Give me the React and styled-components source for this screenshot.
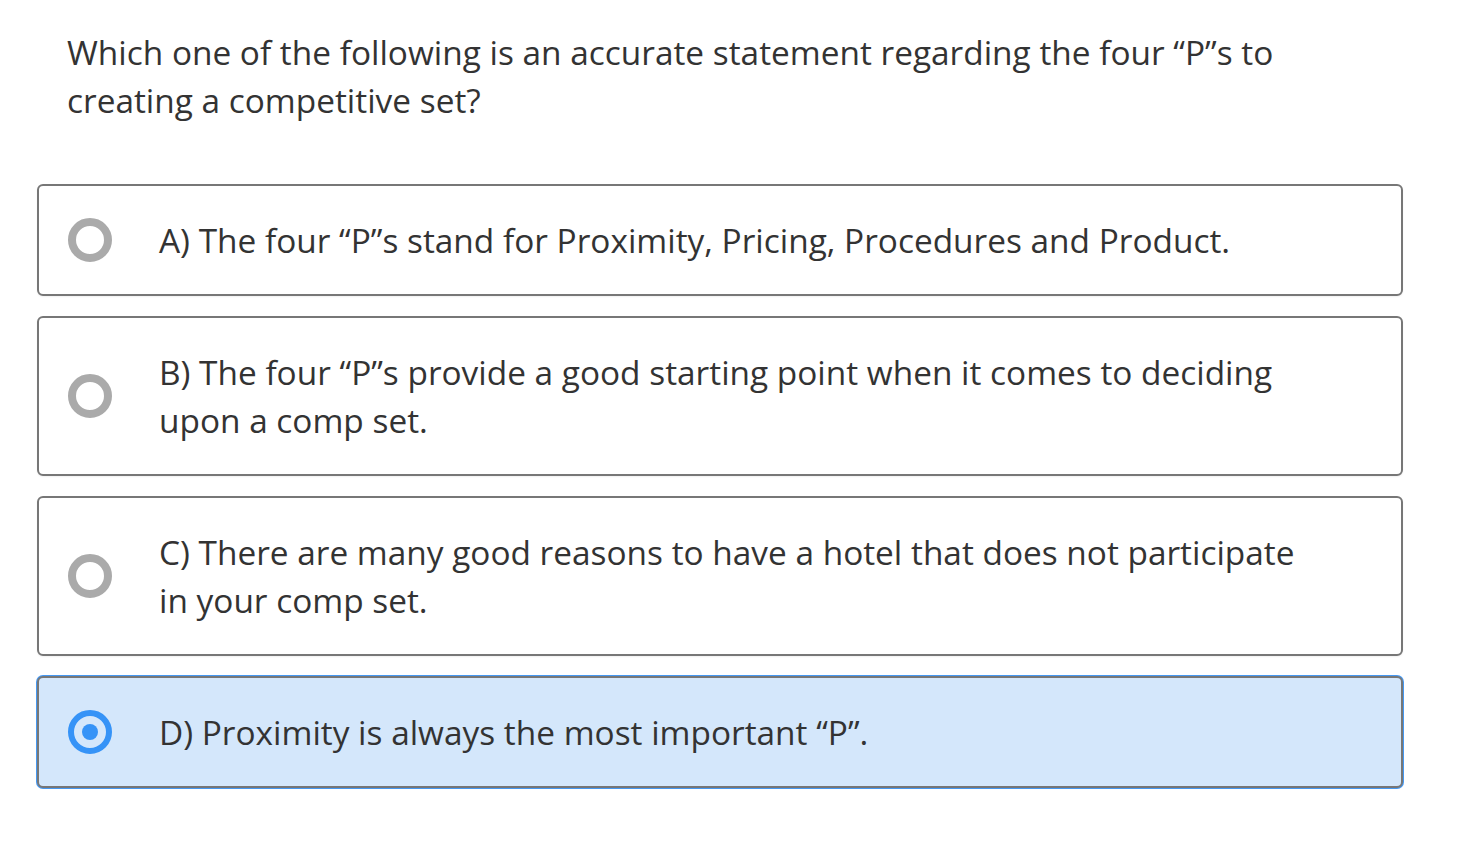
import React, { useState } from "react";
import styled, { createGlobalStyle } from "styled-components";

const Global = createGlobalStyle`
  html, body { margin: 0; padding: 0; background: #fff; }
  body { font-family: "Open Sans", "Noto Sans", sans-serif; color: #333; }
`;

const Page = styled.div`
  padding: 28px 65px 40px 37px;
`;

const Question = styled.p`
  margin: 0 0 60px 30px;
  max-width: 1250px;
  font-size: 33.4px;
  line-height: 48px;
  color: #333;
`;

const List = styled.div`
  display: flex;
  flex-direction: column;
  gap: 20px;
`;

const Card = styled.label`
  display: flex;
  align-items: center;
  gap: 47px;
  padding: 30px 84px 30px 29px;
  border: 2px solid #777;
  border-radius: 6px;
  background: ${(p) => (p.$selected ? "#d4e7fb" : "#fff")};
  box-shadow: ${(p) =>
    p.$selected ? "0 0 0 1px #4598f2" : "0 1px 2px rgba(0,0,0,0.06)"};
  cursor: pointer;
`;

const Radio = styled.span`
  flex: 0 0 auto;
  box-sizing: border-box;
  width: 44px;
  height: 44px;
  border-radius: 50%;
  border: ${(p) => (p.$selected ? "6px solid #3593f7" : "8px solid #aaa")};
  display: flex;
  align-items: center;
  justify-content: center;
  &::after {
    content: "";
    display: ${(p) => (p.$selected ? "block" : "none")};
    width: 16px;
    height: 16px;
    border-radius: 50%;
    background: #3593f7;
  }
`;

const Text = styled.span`
  font-size: 33.4px;
  line-height: 48px;
  color: #333;
`;

const options = [
  "A) The four \u201CP\u201Ds stand for Proximity, Pricing, Procedures and Product.",
  "B) The four \u201CP\u201Ds provide a good starting point when it comes to deciding upon a comp set.",
  "C) There are many good reasons to have a hotel that does not participate in your comp set.",
  "D) Proximity is always the most important \u201CP\u201D.",
];

export default function App() {
  const [sel, setSel] = useState(3);
  return (
    <Page>
      <Global />
      <Question>
        Which one of the following is an accurate statement regarding the four
        {" \u201CP\u201Ds"} to creating a competitive set?
      </Question>
      <List>
        {options.map((o, i) => (
          <Card key={i} $selected={sel === i} onClick={() => setSel(i)}>
            <Radio $selected={sel === i} />
            <Text>{o}</Text>
          </Card>
        ))}
      </List>
    </Page>
  );
}
